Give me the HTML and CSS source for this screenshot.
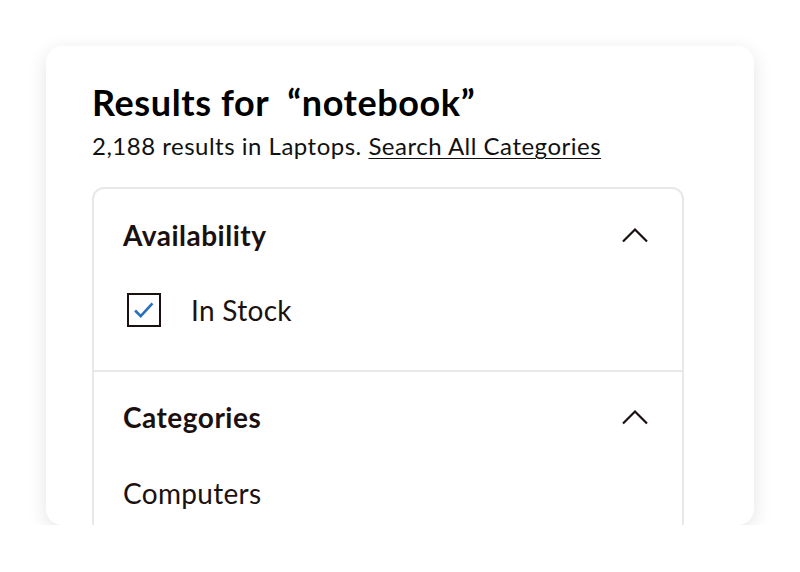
FILE: index.html
```html
<!DOCTYPE html>
<html>
<head>
<meta charset="utf-8">
<link rel="stylesheet" href="styles.css">
</head>
<body>
<div class="page">
  <div class="card">
    <h1 class="title">Results for&nbsp; “notebook”</h1>
    <p class="summary">2,188 results in Laptops. <a class="link" href="#">Search All Categories</a></p>
    <div class="filters">
      <section class="group group-avail">
        <div class="group-head">
          <h2 class="group-title">Availability</h2>
          <svg class="chev" viewBox="0 0 28 18" width="28" height="18"><path d="M2 15.5 L14 3.5 L26 15.5" fill="none" stroke="#1a1010" stroke-width="2.2"/></svg>
        </div>
        <label class="check-row">
          <span class="box"><svg viewBox="0 0 32 32" width="30" height="30"><path d="M6.5 16.5 L12.5 22.5 L25 9" fill="none" stroke="#2a6fbd" stroke-width="2.8"/></svg></span>
          <span class="check-label">In Stock</span>
        </label>
      </section>
      <section class="group group-cat">
        <div class="group-head">
          <h2 class="group-title">Categories</h2>
          <svg class="chev" viewBox="0 0 28 18" width="28" height="18"><path d="M2 15.5 L14 3.5 L26 15.5" fill="none" stroke="#1a1010" stroke-width="2.2"/></svg>
        </div>
        <div class="cat">Computers</div>
      </section>
    </div>
  </div>
</div>
</body>
</html>
```
FILE: styles.css
```css
* { box-sizing: border-box; }
html, body { margin: 0; padding: 0; background: #ffffff; }
body { font-family: Lato, "Liberation Sans", sans-serif; color: #1b1111; }
.page { padding: 46px 0 0 46px; }
.card {
  width: 708px;
  height: 479px;
  background: #fff;
  border-radius: 16px;
  box-shadow: 0 5px 20px rgba(0,0,0,0.11);
  padding: 34px 0 0 46px;
  overflow: hidden;
}
.title {
  margin: 0;
  font-size: 36px;
  font-weight: 700;
  color: #000;
  line-height: 44px;
  letter-spacing: 0.6px;
}
.summary {
  margin: 7px 0 0 0;
  font-size: 24px;
  line-height: 30px;
  color: #111;
  letter-spacing: 0.5px;
}
.link { color: #111; text-decoration: underline; text-underline-offset: 3px; text-decoration-thickness: 1px; }
.filters {
  margin-top: 26px;
  width: 592px;
  border: 2px solid #e8e8e8;
  border-radius: 12px;
}
.group { padding: 0 33px 0 29px; }
.group-avail { height: 181px; }
.group-cat { border-top: 2px solid #e8e8e8; height: 220px; }
.group-head {
  display: flex;
  justify-content: space-between;
  align-items: center;
  height: 92px;
}
.group-title { margin: 0; font-size: 28px; font-weight: 700; color: #1b1010; letter-spacing: 0.5px; }
.group-cat .group-head { height: 90px; }
.check-row { display: flex; align-items: center; gap: 30px; margin-top: 12px; }
.box {
  width: 34px; height: 34px;
  border: 2px solid #1b1111;
  display: flex; align-items: center; justify-content: center;
  margin-left: 4px;
}
.check-label { font-size: 28px; color: #1b1111; letter-spacing: 0.3px; line-height: 34px; }
.cat { font-size: 28px; color: #1b1111; margin-top: 16px; line-height: 30px; letter-spacing: 0.3px; }
```
